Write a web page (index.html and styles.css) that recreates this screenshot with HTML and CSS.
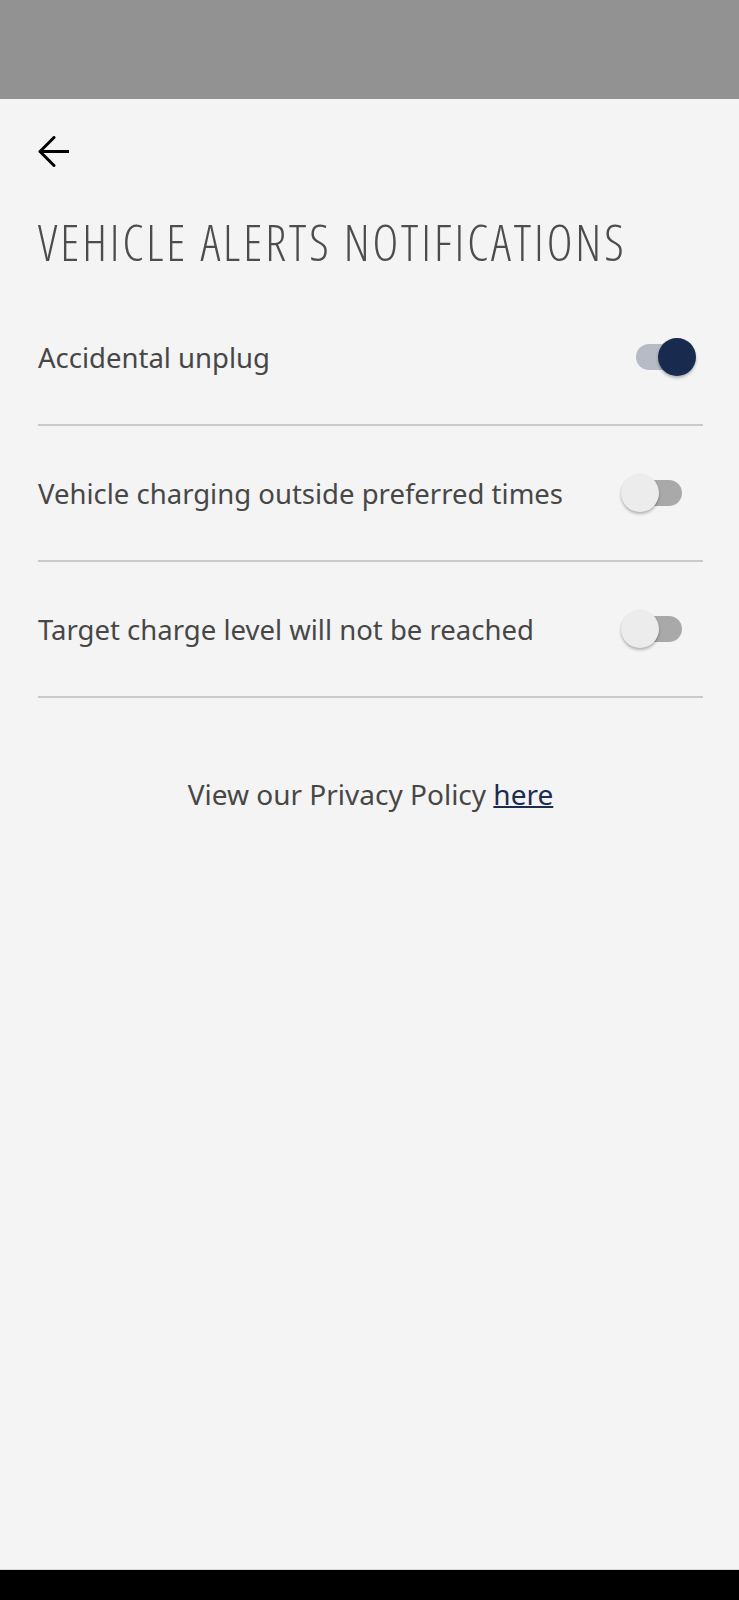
FILE: index.html
```html
<!DOCTYPE html>
<html lang="en">
<head>
<meta charset="utf-8">
<title>Vehicle Alerts Notifications</title>
<link rel="stylesheet" href="styles.css">
</head>
<body>
<div class="screen">
  <div class="status"></div>
  <main class="content">
    <div class="appbar">
      <svg class="back" width="31" height="31" viewBox="0 0 31 31" aria-label="Back">
        <path d="M16 1.5 L2 15.5 L16 29.5 M2 15.5 H30.5" fill="none" stroke="#000" stroke-width="3" stroke-linecap="round" stroke-linejoin="round"/>
      </svg>
    </div>
    <h1 class="title">VEHICLE ALERTS NOTIFICATIONS</h1>
    <ul class="list">
      <li class="row">
        <span class="label">Accidental unplug</span>
        <span class="switch on"><span class="knob"></span></span>
      </li>
      <li class="row">
        <span class="label">Vehicle charging outside preferred times</span>
        <span class="switch"><span class="knob"></span></span>
      </li>
      <li class="row">
        <span class="label">Target charge level will not be reached</span>
        <span class="switch"><span class="knob"></span></span>
      </li>
    </ul>
    <p class="privacy">View our Privacy Policy <a href="#" class="link">here</a></p>
  </main>
  <div class="navbar"></div>
</div>
</body>
</html>
```

FILE: styles.css
```css
* { box-sizing: border-box; }
html, body { margin: 0; padding: 0; }
body {
  background: #f4f4f4;
  font-family: "Noto Sans", "Lato", sans-serif;
  color: #474747;
}
.screen {
  width: 739px;
  height: 1600px;
  display: flex;
  flex-direction: column;
}
.status {
  height: 99px;
  background: #929292;
  flex: none;
}
.content {
  flex: 1;
  padding: 0 36px 0 38px;
}
.appbar {
  padding-top: 37px;
  height: 68px;
}
.back { display: block; }
.title {
  margin: 47px 0 0 0;
  font-family: "Open Sans", sans-serif;
  font-stretch: 75%;
  font-weight: 300;
  font-size: 49px;
  line-height: 56px;
  letter-spacing: 2.9px;
  color: #4d4d4d;
  height: 76px;
  white-space: nowrap;
}
.list {
  list-style: none;
  margin: 0;
  padding: 0;
}
.row {
  height: 136px;
  border-bottom: 2px solid #c9c9c9;
  display: flex;
  align-items: center;
  justify-content: space-between;
}
.label {
  font-size: 27.5px;
  color: #474747;
}
.switch {
  position: relative;
  width: 46px;
  height: 26px;
  border-radius: 13px;
  background: #a9a9a9;
  margin-right: 21px;
  flex: none;
}
.switch .knob {
  position: absolute;
  top: -6px;
  left: -15px;
  width: 38px;
  height: 38px;
  border-radius: 50%;
  background: #ececec;
  box-shadow: 0 2px 3px rgba(0,0,0,0.28);
}
.switch.on { background: #b6bbc5; }
.switch.on .knob {
  left: 22px;
  background: #182a4e;
}
.privacy {
  margin: 77px 0 0 0;
  text-align: center;
  font-size: 28px;
  color: #474747;
}
.link {
  color: #1a2c50;
  text-decoration: underline;
  text-decoration-thickness: 2px;
}
.navbar {
  height: 31px;
  background: #000;
  border-top: 1px solid #d8d8d8;
  flex: none;
}
```
